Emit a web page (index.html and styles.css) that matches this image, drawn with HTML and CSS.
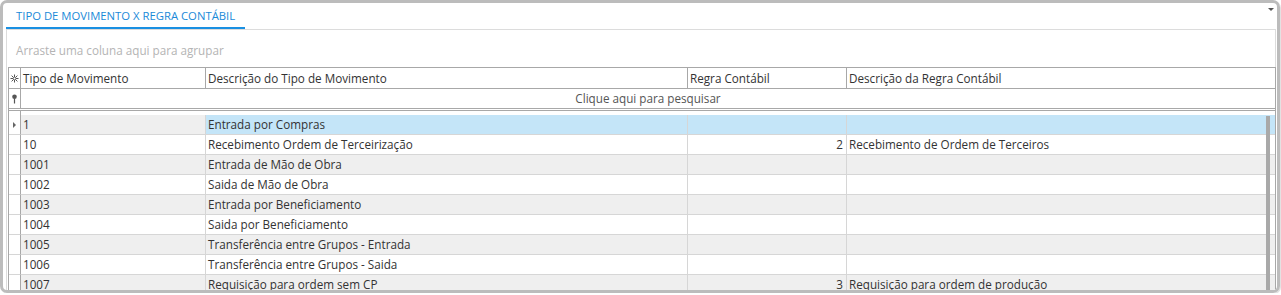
FILE: index.html
```html
<!DOCTYPE html>
<html lang="pt">
<head>
<meta charset="utf-8">
<link rel="stylesheet" href="styles.css">
</head>
<body>
<div class="frame">
  <div class="tabbar">
    <div class="tab">TIPO DE MOVIMENTO X REGRA CONTÁBIL</div>
    <span class="dropdown"></span>
  </div>
  <div class="panel">
    <div class="groupby">Arraste uma coluna aqui para agrupar</div>
    <div class="grid">
      <div class="row hrow">
        <div class="ind"><svg width="9" height="9" viewBox="0 0 9 9"><g stroke="#555" stroke-width="1"><path d="M4.5 0.5v8M0.5 4.5h8M1.6 1.6l5.8 5.8M7.4 1.6l-5.8 5.8"/></g><circle cx="4.5" cy="4.5" r="1.4" fill="#fff" stroke="#555" stroke-width="0.8"/></svg></div>
        <div class="cell">Tipo de Movimento</div>
        <div class="cell">Descrição do Tipo de Movimento</div>
        <div class="cell">Regra Contábil</div>
        <div class="cell last">Descrição da Regra Contábil</div>
      </div>
      <div class="frow">
        <div class="ind"><svg width="7" height="10" viewBox="0 0 7 10"><circle cx="3.5" cy="2.8" r="2.3" fill="#555"/><path d="M3.5 4.5v5" stroke="#555" stroke-width="1.2"/></svg></div>
        <div class="fcell">Clique aqui para pesquisar</div>
      </div>
      <div class="sep"><div class="ind"></div><div></div></div>
      <div class="body">
        <div class="row drow odd sel">
          <div class="ind"><span class="arrow"></span></div>
          <div class="cell">1</div>
          <div class="cell">Entrada por Compras</div>
          <div class="cell num"></div>
          <div class="cell last"></div>
        </div>
        <div class="row drow">
          <div class="ind"></div>
          <div class="cell">10</div>
          <div class="cell">Recebimento Ordem de Terceirização</div>
          <div class="cell num">2</div>
          <div class="cell last">Recebimento de Ordem de Terceiros</div>
        </div>
        <div class="row drow odd">
          <div class="ind"></div>
          <div class="cell">1001</div>
          <div class="cell">Entrada de Mão de Obra</div>
          <div class="cell num"></div>
          <div class="cell last"></div>
        </div>
        <div class="row drow">
          <div class="ind"></div>
          <div class="cell">1002</div>
          <div class="cell">Saida de Mão de Obra</div>
          <div class="cell num"></div>
          <div class="cell last"></div>
        </div>
        <div class="row drow odd">
          <div class="ind"></div>
          <div class="cell">1003</div>
          <div class="cell">Entrada por Beneficiamento</div>
          <div class="cell num"></div>
          <div class="cell last"></div>
        </div>
        <div class="row drow">
          <div class="ind"></div>
          <div class="cell">1004</div>
          <div class="cell">Saida por Beneficiamento</div>
          <div class="cell num"></div>
          <div class="cell last"></div>
        </div>
        <div class="row drow odd">
          <div class="ind"></div>
          <div class="cell">1005</div>
          <div class="cell">Transferência entre Grupos - Entrada</div>
          <div class="cell num"></div>
          <div class="cell last"></div>
        </div>
        <div class="row drow">
          <div class="ind"></div>
          <div class="cell">1006</div>
          <div class="cell">Transferência entre Grupos - Saida</div>
          <div class="cell num"></div>
          <div class="cell last"></div>
        </div>
        <div class="row drow odd">
          <div class="ind"></div>
          <div class="cell">1007</div>
          <div class="cell">Requisição para ordem sem CP</div>
          <div class="cell num">3</div>
          <div class="cell last">Requisição para ordem de produção</div>
        </div>
        <div class="scroll"></div>
      </div>
    </div>
  </div>
</div>
</body>
</html>
```

FILE: styles.css
```css
* { box-sizing: border-box; }
html, body { margin: 0; padding: 0; background: #fff; }
body {
  font-family: "Open Sans", "Noto Sans", sans-serif;
  font-size: 11.7px;
  color: #333;
}
.frame {
  width: 1280px;
  height: 293px;
  border: 3px solid #bcbcbc;
  border-radius: 7px;
  box-shadow: 1px 1px 0 #e2e2e2;
  overflow: hidden;
  display: flex;
  flex-direction: column;
}
.tabbar {
  display: flex;
  height: 26px;
  padding-left: 3px;
  flex: none;
}
.tab {
  height: 26px;
  padding: 2px 10px 0 10px;
  line-height: 22px;
  border-bottom: 2px solid #1a90e2;
  color: #1a8ad8;
  font-size: 11.3px;
  white-space: nowrap;
}
.dropdown {
  margin-left: auto;
  margin-right: 3px;
  margin-top: 5px;
  width: 0;
  height: 0;
  border-left: 3px solid transparent;
  border-right: 3px solid transparent;
  border-top: 3px solid #555;
}
.panel {
  flex: 1;
  margin: 0 1px 0 3px;
  border: 1px solid #dcdcdc;
  border-bottom: none;
  display: flex;
  flex-direction: column;
  min-height: 0;
}
.groupby {
  height: 37px;
  flex: none;
  padding: 3px 0 0 9px;
  display: flex;
  align-items: center;
  color: #b4b4b4;
}
.grid {
  margin: 0 -1px 0 1px;
  border: 1px solid #a8a8a8;
  border-bottom: none;
  flex: 1;
  min-height: 0;
}
.row {
  display: grid;
  grid-template-columns: 12px 185px 482px 159px 1fr;
}
.ind {
  border-right: 1px solid #a8a8a8;
  display: flex;
  align-items: center;
  justify-content: center;
}
.hrow {
  height: 21px;
  border-bottom: 1px solid #a8a8a8;
}
.hrow .cell {
  border-right: 1px solid #a8a8a8;
  padding: 0 3px 0 2px;
  line-height: 20px;
  white-space: nowrap;
  color: #333;
}
.hrow .ind svg { margin-left: -1px; }
.hrow .cell.last { border-right: none; }
.frow {
  display: grid;
  grid-template-columns: 12px 1fr;
  height: 20px;
  border-bottom: 1px solid #a8a8a8;
}
.frow .ind svg { margin-top: 1px; }
.fcell {
  text-align: center;
  line-height: 19px;
  color: #555;
}
.sep {
  display: grid;
  grid-template-columns: 12px 1fr;
  margin-top: 1px;
  height: 5px;
  border-top: 1px solid #a8a8a8;
}
.body {
  position: relative;
}
.drow {
  height: 20px;
}
.drow .cell {
  border-right: 1px solid #d6d6d6;
  border-bottom: 1px solid #d6d6d6;
  padding: 0 3px 0 2px;
  line-height: 19px;
  white-space: nowrap;
  overflow: hidden;
}
.drow .ind { border-bottom: 1px solid #d6d6d6; }
.drow .cell.last { border-right: none; }
.drow .cell.num { text-align: right; }
.drow.odd .cell { background: #efefef; }
.drow.sel .cell { background: #c4e5f8; }
.drow.sel .cell:nth-child(2) { background: #efefef; }
.arrow {
  width: 0;
  height: 0;
  border-top: 3px solid transparent;
  border-bottom: 3px solid transparent;
  border-left: 3px solid #666;
  margin-left: -1px;
}
.scroll {
  position: absolute;
  top: 1px;
  right: 5px;
  width: 4px;
  height: 200px;
  background: #a9a9a9;
}
```
